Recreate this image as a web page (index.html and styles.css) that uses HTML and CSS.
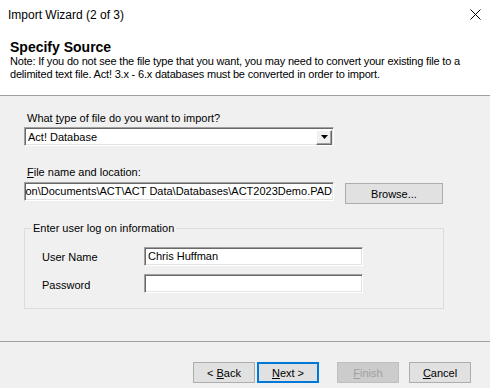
FILE: index.html
```html
<!DOCTYPE html>
<html>
<head>
<meta charset="utf-8">
<link rel="stylesheet" href="styles.css">
</head>
<body>
<div class="window">
  <div class="top">
    <div class="titlebar">
      <span class="title">Import Wizard (2 of 3)</span>
      <svg class="close" width="11" height="11" viewBox="0 0 11 11"><path d="M0.5 0.5 L10.5 10.5 M10.5 0.5 L0.5 10.5" stroke="#000" stroke-width="1" fill="none"/></svg>
    </div>
    <div class="heading">Specify Source</div>
    <div class="note">Note: If you do not see the file type that you want, you may need to convert your existing file to a<br>delimited text file. Act! 3.x - 6.x databases must be converted in order to import.</div>
  </div>
  <div class="main">
    <div class="label lbl-type">What <u>t</u>ype of file do you want to import?</div>
    <div class="combo">
      <span class="combo-text">Act! Database</span>
      <span class="combo-btn"><svg width="7" height="4" viewBox="0 0 7 4"><polygon points="0,0 7,0 3.5,4" fill="#000"/></svg></span>
    </div>
    <div class="label lbl-file"><u>F</u>ile name and location:</div>
    <div class="file-row">
      <div class="field file"><span class="file-text">C:\Users\Administration\Documents\ACT\ACT Data\Databases\ACT2023Demo.PAD</span></div>
      <button class="btn browse">Browse...</button>
    </div>
    <fieldset class="group">
      <legend>Enter user log on information</legend>
      <div class="row">
        <span class="row-label">User Name</span>
        <div class="field short">Chris Huffman</div>
      </div>
      <div class="row row2">
        <span class="row-label">Password</span>
        <div class="field short"></div>
      </div>
    </fieldset>
  </div>
  <div class="footer">
    <button class="btn back">&lt; <u>B</u>ack</button>
    <button class="btn next"><u>N</u>ext &gt;</button>
    <button class="btn finish" disabled><u>F</u>inish</button>
    <button class="btn cancel"><u>C</u>ancel</button>
  </div>
</div>
</body>
</html>
```
FILE: styles.css
```css
* { box-sizing: border-box; }
html, body { margin: 0; padding: 0; }
body {
  width: 490px;
  height: 388px;
  background: #f0f0f0;
  font-family: "Liberation Sans", Arial, sans-serif;
  font-size: 11px;
  color: #000;
  overflow: hidden;
}
.window {
  width: 490px;
  height: 388px;
  display: flex;
  flex-direction: column;
}
.top {
  height: 96px;
  background: #fff;
  border-bottom: 1px solid #a0a0a0;
}
.titlebar {
  height: 30px;
  padding: 8px 9px 0 8px;
  display: flex;
  justify-content: space-between;
  align-items: flex-start;
}
.title {
  font-size: 12px;
  line-height: 14px;
}
.close { margin-top: 1px; display: block; }
.heading {
  margin-top: 9px;
  padding-left: 10px;
  font-size: 14px;
  line-height: 16px;
  font-weight: bold;
}
.note {
  padding-left: 10px;
  line-height: 13px;
  white-space: nowrap;
  letter-spacing: -0.185px;
}
.main {
  flex: 1;
  padding: 16px 0 0 24px;
}
.label { line-height: 13px; padding-left: 3px; }
.lbl-file { margin-top: 20px; }
.field {
  height: 19px;
  background: #fff;
  border-top: 1px solid #a0a0a0;
  border-left: 1px solid #a0a0a0;
  border-right: 1px solid #fff;
  border-bottom: 1px solid #fff;
  box-shadow: inset 1px 1px 0 #696969, inset -1px -1px 0 #e3e3e3;
  padding: 1px 2px 0 3px;
  line-height: 14px;
  white-space: nowrap;
  overflow: hidden;
}
.combo {
  margin-top: 2px;
  width: 310px;
  height: 19px;
  background: #fff;
  border-top: 1px solid #a0a0a0;
  border-left: 1px solid #a0a0a0;
  border-right: 1px solid #fff;
  border-bottom: 1px solid #fff;
  box-shadow: inset 1px 1px 0 #696969, inset -1px -1px 0 #e3e3e3;
  display: flex;
  align-items: center;
  justify-content: space-between;
  padding: 0 1px 0 3px;
}
.combo-text { line-height: 14px; padding-top: 1px; }
.combo-btn {
  width: 16px;
  height: 15px;
  margin-top: 1px;
  background: #f0f0f0;
  border: 1px solid;
  border-color: #fff #696969 #696969 #fff;
  box-shadow: inset -1px -1px 0 #a0a0a0;
  display: flex;
  align-items: center;
  justify-content: center;
}
.combo-btn svg { display: block; }
.file-row {
  margin-top: 3px;
  display: flex;
  align-items: flex-start;
}
.file {
  width: 310px;
  display: flex;
  justify-content: flex-end;
  padding-right: 1px;
  padding-left: 2px;
}
.file-text { flex-shrink: 0; }
.btn {
  height: 21px;
  background: #e1e1e1;
  border: 1px solid #adadad;
  font-family: "Liberation Sans", Arial, sans-serif;
  font-size: 11px;
  color: #000;
  padding: 1px 0 0 0;
  line-height: 13px;
  margin: 0;
}
.browse {
  width: 98px;
  margin-top: 1px;
  margin-left: 11px;
}
.group {
  margin: 18px 0 0 0;
  width: 420px;
  border: 1px solid #dcdcdc;
  padding: 12px 0 15px 6px;
  min-width: 0;
}
.group legend {
  padding: 0 2px;
  line-height: 13px;
}
.row {
  display: flex;
  align-items: center;
  height: 19px;
}
.row2 { margin-top: 8px; }
.row-label {
  width: 102px;
  margin-left: 11px;
  line-height: 13px;
  padding-top: 2px;
}
.row2 .row-label { padding-top: 4px; }
.short { width: 219px; }
.footer {
  height: 47px;
  border-top: 1px solid #a0a0a0;
  padding: 20px 19px 0 0;
  display: flex;
  justify-content: flex-end;
  align-items: flex-start;
}
.footer .btn { width: 62px; }
.back { margin-right: 2px; }
.next { border: 2px solid #0078d7; margin-right: 18px; }
.finish {
  background: #cccccc;
  border-color: #bfbfbf;
  color: #a0a0a0;
  margin-right: 10px;
}
```
